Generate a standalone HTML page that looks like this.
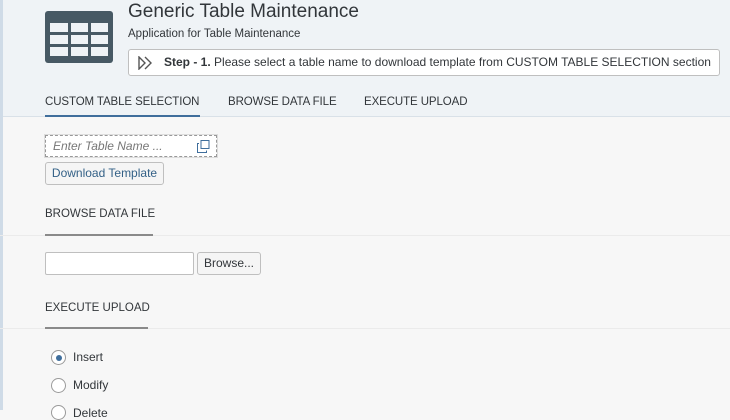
<!DOCTYPE html>
<html><head><style>
*{margin:0;padding:0;box-sizing:border-box}
body{width:730px;height:410px;overflow:hidden;background:#f7f7f7;font-family:"Liberation Sans",sans-serif;color:#32363a;position:relative}
.a{position:absolute;white-space:nowrap}
.hdr{left:0;top:0;width:730px;height:117px;background:#eff3f6;border-bottom:1px solid #d9e1e8}
.strip{left:0;top:0;width:3px;height:410px;background:#cfdbe7}
.tab{top:96px;font-size:11.5px;color:#32363a;letter-spacing:-0.1px}
.sec{font-size:11.5px;color:#32363a}
.radio{width:15px;height:15px;border:1px solid #9a9a9a;border-radius:50%;background:#fff}
</style></head><body>
<div class="a hdr"></div>
<div class="a strip"></div>
<svg class="a" style="left:45px;top:11px" width="68" height="52" viewBox="0 0 68 52">
<rect x="0" y="0" width="68" height="52" rx="3" fill="#475964"/>
<g fill="#eef2f5">
<rect x="5" y="12" width="18" height="9"/><rect x="26" y="12" width="17" height="9"/><rect x="46" y="12" width="17" height="9"/>
<rect x="5" y="24" width="18" height="9"/><rect x="26" y="24" width="17" height="9"/><rect x="46" y="24" width="17" height="9"/>
<rect x="5" y="36" width="18" height="9"/><rect x="26" y="36" width="17" height="9"/><rect x="46" y="36" width="17" height="9"/>
</g></svg>
<div class="a" style="left:128px;top:1px;font-size:19px">Generic Table Maintenance</div>
<div class="a" style="left:128px;top:28px;font-size:11.5px">Application for Table Maintenance</div>
<div class="a" style="left:128px;top:49px;width:592px;height:27px;border:1px solid #bfbfbf;border-radius:3px;background:#fff;font-size:12px;line-height:25px;padding-left:35px">
<svg class="a" style="left:9px;top:6px" width="16" height="14" viewBox="0 0 16 14"><path d="M1 1L7 7L1 13ZM7 1L13 7L7 13" fill="none" stroke="#555" stroke-width="1.4"/></svg>
<b>Step - 1.</b> Please select a table name to download template from CUSTOM TABLE SELECTION section</div>
<div class="a tab" style="left:45px">CUSTOM TABLE SELECTION</div>
<div class="a tab" style="left:228px">BROWSE DATA FILE</div>
<div class="a tab" style="left:364px">EXECUTE UPLOAD</div>
<div class="a" style="left:45px;top:115px;width:155px;height:2px;background:#3f6e9c"></div>
<div class="a" style="left:45px;top:135px;width:172px;height:22px;border:1px dashed #999;background:#fff;outline:1px solid #ddd;font-size:12px;font-style:italic;color:#777;padding:3px 7px">Enter Table Name ...
<svg class="a" style="left:151px;top:4px" width="13" height="13" viewBox="0 0 13 13"><rect x="4" y="0.5" width="8" height="8" fill="none" stroke="#3f6e9c"/><path d="M2 3.5H0.5V12.5H9.5V10.5" fill="none" stroke="#3f6e9c"/></svg></div>
<div class="a" style="left:45px;top:162px;width:119px;height:23px;border:1px solid #bfbfbf;border-radius:3px;background:#f5f5f5;font-size:12px;color:#346187;line-height:21px;text-align:center">Download Template</div>
<div class="a" style="left:0;top:235px;width:730px;height:1px;background:#ebebeb"></div>
<div class="a sec" style="left:45px;top:208px">BROWSE DATA FILE</div>
<div class="a" style="left:45px;top:234px;width:108px;height:2px;background:#8a8a8a"></div>
<div class="a" style="left:45px;top:252px;width:149px;height:23px;border:1px solid #bfbfbf;border-radius:2px;background:#fff"></div>
<div class="a" style="left:197px;top:252px;width:64px;height:23px;border:1px solid #bfbfbf;border-radius:3px;background:#f5f5f5;font-size:12px;line-height:21px;text-align:center;color:#32363a">Browse...</div>
<div class="a" style="left:0;top:328px;width:730px;height:1px;background:#ebebeb"></div>
<div class="a sec" style="left:45px;top:302px">EXECUTE UPLOAD</div>
<div class="a" style="left:45px;top:327px;width:103px;height:2px;background:#8a8a8a"></div>
<div class="a radio" style="left:51px;top:350px"><div class="a" style="left:3.5px;top:3.5px;width:6px;height:6px;border-radius:50%;background:#3f6e9c"></div></div>
<div class="a" style="left:73px;top:350px;font-size:12px">Insert</div>
<div class="a radio" style="left:51px;top:378px"></div>
<div class="a" style="left:73px;top:378px;font-size:12px">Modify</div>
<div class="a radio" style="left:51px;top:405px"></div>
<div class="a" style="left:73px;top:406px;font-size:12px">Delete</div>
</body></html>
